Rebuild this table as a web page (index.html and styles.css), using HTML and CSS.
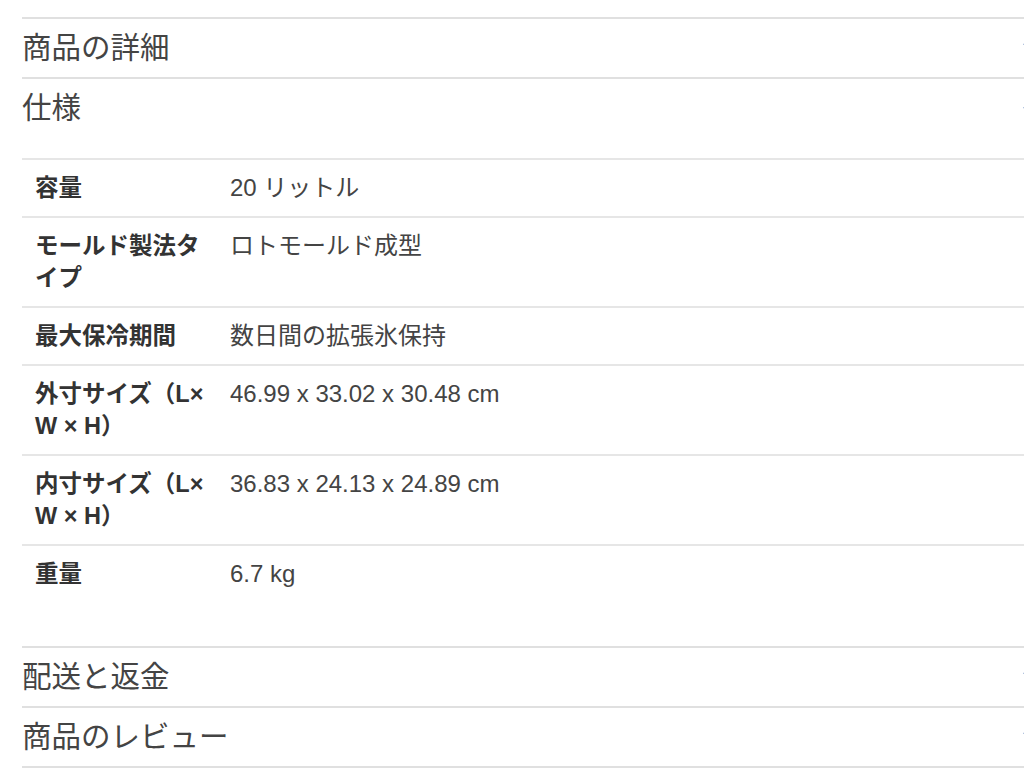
FILE: index.html
```html
<!DOCTYPE html>
<html lang="ja">
<head>
<meta charset="utf-8">
<link rel="stylesheet" href="styles.css">
</head>
<body>
<div class="page">
  <div class="accordion">
    <div class="acc-head">
      <span class="acc-title">商品の詳細</span>
      <svg class="chev" width="12" height="8" viewBox="0 0 12 8"><path d="M1 1.5 L6 6.5 L11 1.5" fill="none" stroke="#4a72b0" stroke-width="2"/></svg>
    </div>
    <div class="acc-head">
      <span class="acc-title">仕様</span>
      <svg class="chev" width="12" height="8" viewBox="0 0 12 8"><path d="M1 6.5 L6 1.5 L11 6.5" fill="none" stroke="#4a72b0" stroke-width="2"/></svg>
    </div>
    <div class="acc-body">
      <table class="specs">
        <tr><th>容量</th><td>20 リットル</td></tr>
        <tr><th>モールド製法タイプ</th><td>ロトモールド成型</td></tr>
        <tr><th>最大保冷期間</th><td>数日間の拡張氷保持</td></tr>
        <tr><th>外寸サイズ（L× W × H）</th><td>46.99 x 33.02 x 30.48 cm</td></tr>
        <tr><th>内寸サイズ（L× W × H）</th><td>36.83 x 24.13 x 24.89 cm</td></tr>
        <tr><th>重量</th><td>6.7 kg</td></tr>
      </table>
    </div>
    <div class="acc-head">
      <span class="acc-title">配送と返金</span>
      <svg class="chev" width="12" height="8" viewBox="0 0 12 8"><path d="M1 1.5 L6 6.5 L11 1.5" fill="none" stroke="#4a72b0" stroke-width="2"/></svg>
    </div>
    <div class="acc-head last">
      <span class="acc-title">商品のレビュー</span>
      <svg class="chev" width="12" height="8" viewBox="0 0 12 8"><path d="M1 1.5 L6 6.5 L11 1.5" fill="none" stroke="#4a72b0" stroke-width="2"/></svg>
    </div>
  </div>
</div>
</body>
</html>
```
FILE: styles.css
```css
html, body {
  margin: 0;
  padding: 0;
  overflow: hidden;
  background: #ffffff;
}
body {
  font-family: "Liberation Sans", "Noto Sans CJK JP", sans-serif;
  color: #444;
}
.page {
  padding: 17px 0 0 22px;
}
.accordion {
  width: 1030px;
}
.acc-head {
  display: flex;
  justify-content: space-between;
  align-items: center;
  height: 58px;
  border-top: 2px solid #e0e0e0;
}
.acc-head.last {
  border-bottom: 2px solid #e0e0e0;
}
.acc-title {
  font-size: 29.5px;
  color: #444;
  padding-bottom: 6px;
}
.chev {
  margin-right: 17px;
  margin-bottom: 4px;
}
.acc-body {
  padding: 21px 0 44px 0;
}
.specs {
  width: 100%;
  border-collapse: collapse;
}
.specs tr {
  border-top: 2px solid #e6e6e6;
}
.specs th, .specs td {
  vertical-align: top;
  text-align: left;
  line-height: 32px;
  padding: 12px 13px;
}
.specs th {
  width: 182px;
  font-size: 23.5px;
  font-weight: bold;
  color: #333;
}
.specs td {
  font-size: 24px;
  padding-left: 0;
  color: #444;
}
```
